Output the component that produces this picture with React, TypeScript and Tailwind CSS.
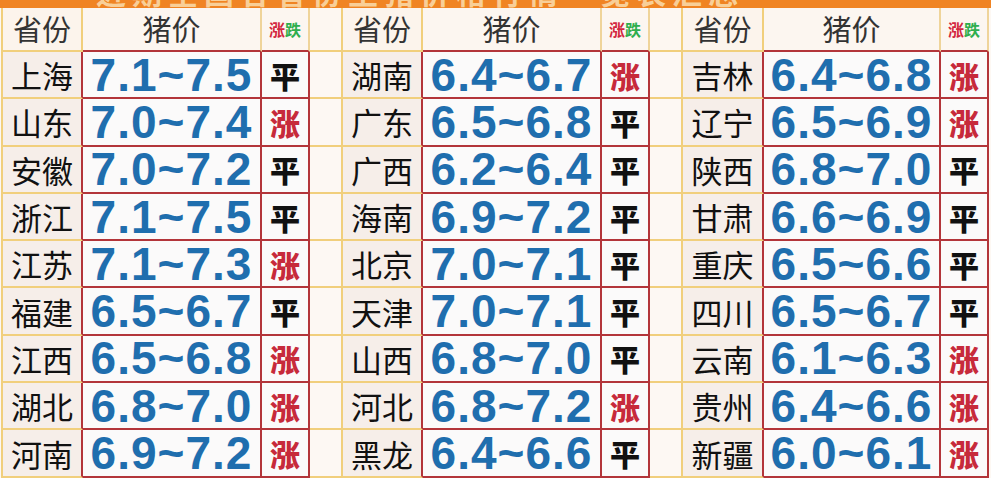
import React from "react"

type Row = [string, string, "平" | "涨"]

const tables: Row[][] = [
  [
    ["上海", "7.1~7.5", "平"],
    ["山东", "7.0~7.4", "涨"],
    ["安徽", "7.0~7.2", "平"],
    ["浙江", "7.1~7.5", "平"],
    ["江苏", "7.1~7.3", "涨"],
    ["福建", "6.5~6.7", "平"],
    ["江西", "6.5~6.8", "涨"],
    ["湖北", "6.8~7.0", "涨"],
    ["河南", "6.9~7.2", "涨"],
  ],
  [
    ["湖南", "6.4~6.7", "涨"],
    ["广东", "6.5~6.8", "平"],
    ["广西", "6.2~6.4", "平"],
    ["海南", "6.9~7.2", "平"],
    ["北京", "7.0~7.1", "平"],
    ["天津", "7.0~7.1", "平"],
    ["山西", "6.8~7.0", "平"],
    ["河北", "6.8~7.2", "涨"],
    ["黑龙", "6.4~6.6", "平"],
  ],
  [
    ["吉林", "6.4~6.8", "涨"],
    ["辽宁", "6.5~6.9", "涨"],
    ["陕西", "6.8~7.0", "平"],
    ["甘肃", "6.6~6.9", "平"],
    ["重庆", "6.5~6.6", "平"],
    ["四川", "6.5~6.7", "平"],
    ["云南", "6.1~6.3", "涨"],
    ["贵州", "6.4~6.6", "涨"],
    ["新疆", "6.0~6.1", "涨"],
  ],
]

const cjk = "font-['Noto_Sans_CJK_SC',sans-serif]"

function HeaderCells({ last }: { last: boolean }) {
  return (
    <>
      <div className={`flex items-center justify-center border-r-2 border-b-2 border-[#f1cf7c] bg-[#fcf4ec] text-[29px] text-[#333] ${cjk}`}>
        省份
      </div>
      <div className={`flex items-center justify-center border-r-2 border-r-[#efd49a] border-b-2 border-b-[#b3353a] bg-[#fcf6f0] text-[29px] text-[#333] ${cjk}`}>
        猪价
      </div>
      <div className={`flex items-center justify-center border-r-2 border-r-[#efd49a] border-b-2 border-b-[#b3353a] bg-[#fcf6f0] text-[16px] font-bold ${cjk}`}>
        <span className="text-[#d3263e]">涨</span>
        <span className="text-[#2fae4e]">跌</span>
      </div>
      {!last && <div className="border-r-2 border-b-2 border-[#f1cf7c] bg-[#fdf7f1]" />}
    </>
  )
}

function DataCells({ row, last }: { row: Row; last: boolean }) {
  const [prov, price, trend] = row
  return (
    <>
      <div className={`flex items-center justify-center border-r-2 border-r-[#b3353a] border-b-2 border-b-[#f1cf7c] bg-[#f6eee9] text-[31px] text-[#111] leading-none ${cjk}`}>
        {prov}
      </div>
      <div className="flex items-center justify-center border-r-2 border-b-2 border-[#b3353a] bg-[#fbfafa] font-['Liberation_Sans',Arial,sans-serif] text-[46px] font-bold leading-none tracking-[1px] text-[#1f6eae]">
        {price}
      </div>
      <div
        className={`flex items-center justify-center border-r-2 border-b-2 border-[#b3353a] bg-[#fbfafa] text-[30px] font-black leading-none ${cjk} ${
          trend === "涨" ? "text-[#c72a3b]" : "text-[#111]"
        }`}
      >
        {trend}
      </div>
      {!last && <div className="border-r-2 border-b-2 border-[#f1cf7c] bg-[#fdf8f3]" />}
    </>
  )
}

export default function App() {
  return (
    <div className="w-[991px] h-[478px] overflow-hidden bg-[#fdf8f3]">
      {/* title banner, cut off at the top of the shot */}
      <div className="h-[8px] overflow-hidden bg-[#f08423]">
        <div className={`-mt-[24px] h-[32px] overflow-hidden pl-[96px] text-[30px] font-bold leading-[30px] tracking-[6px] text-[#f8cf98] ${cjk}`}>
          近期全国各省份生猪价格行情一览表汇总
        </div>
      </div>
      <div className="ml-[1px] grid grid-cols-[80px_179px_48px_33px_80px_179px_48px_33px_81px_177px_48px] grid-rows-[44px_repeat(9,47.3px)] border-l-2 border-[#f1cf7c]">
        {tables.map((_, t) => (
          <HeaderCells key={"h" + t} last={t === 2} />
        ))}
        {Array.from({ length: 9 }).map((_, r) =>
          tables.map((tbl, t) => <DataCells key={r + "-" + t} row={tbl[r]} last={t === 2} />)
        )}
      </div>
    </div>
  )
}
